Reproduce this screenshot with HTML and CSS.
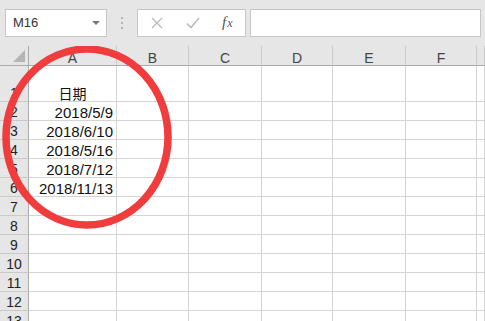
FILE: index.html
```html
<!DOCTYPE html>
<html lang="en">
<head>
  <meta charset="UTF-8">
  <title>Sheet1</title>
  <link rel="stylesheet" href="styles.css">
</head>
<body>
  <!-- Name box + formula bar -->
  <div class="toolbar">
    <div class="namebox">
      <span>M16</span>
      <svg class="caret" width="8" height="4" viewBox="0 0 8 4"><path d="M0 0h8L4 4z" fill="#7a7a7a"/></svg>
    </div>
    <div class="grip"><i></i><i></i><i></i></div>
    <div class="fbuttons">
      <svg width="12" height="12" viewBox="0 0 12 12"><path d="M1 1l10 10M11 1L1 11" stroke="#bcbcbc" stroke-width="1.4" fill="none"/></svg>
      <svg width="14" height="12" viewBox="0 0 14 12"><path d="M1 6.5l4 4L13 1" stroke="#bcbcbc" stroke-width="1.6" fill="none"/></svg>
      <span class="fx"><i>f</i><i class="sub">x</i></span>
    </div>
    <div class="finput"></div>
  </div>

  <!-- Worksheet -->
  <div class="sheet">
    <table class="grid">
      <colgroup>
        <col style="width:29px"><col style="width:88px"><col style="width:72px"><col style="width:73px">
        <col style="width:71px"><col style="width:73px"><col style="width:71px"><col style="width:8px">
      </colgroup>
      <tr class="head">
        <th class="corner"><svg width="12" height="12" viewBox="0 0 12 12"><path d="M12 0v12H0z" fill="#b5b5b5"/></svg></th>
        <th>A</th><th>B</th><th>C</th><th>D</th><th>E</th><th>F</th><th></th>
      </tr>
      <tr class="tall"><th>1</th><td class="center">日期</td><td></td><td></td><td></td><td></td><td></td><td></td></tr>
      <tr><th>2</th><td class="num">2018/5/9</td><td></td><td></td><td></td><td></td><td></td><td></td></tr>
      <tr><th>3</th><td class="num">2018/6/10</td><td></td><td></td><td></td><td></td><td></td><td></td></tr>
      <tr><th>4</th><td class="num">2018/5/16</td><td></td><td></td><td></td><td></td><td></td><td></td></tr>
      <tr><th>5</th><td class="num">2018/7/12</td><td></td><td></td><td></td><td></td><td></td><td></td></tr>
      <tr><th>6</th><td class="num">2018/11/13</td><td></td><td></td><td></td><td></td><td></td><td></td></tr>
      <tr><th>7</th><td></td><td></td><td></td><td></td><td></td><td></td><td></td></tr>
      <tr><th>8</th><td></td><td></td><td></td><td></td><td></td><td></td><td></td></tr>
      <tr><th>9</th><td></td><td></td><td></td><td></td><td></td><td></td><td></td></tr>
      <tr><th>10</th><td></td><td></td><td></td><td></td><td></td><td></td><td></td></tr>
      <tr><th>11</th><td></td><td></td><td></td><td></td><td></td><td></td><td></td></tr>
      <tr><th>12</th><td></td><td></td><td></td><td></td><td></td><td></td><td></td></tr>
      <tr><th>13</th><td></td><td></td><td></td><td></td><td></td><td></td><td></td></tr>
    </table>

    <!-- red hand-drawn ring over column A -->
    <svg class="mark" width="485" height="275" viewBox="0 0 485 275">
      <ellipse cx="87" cy="91" rx="81" ry="88" fill="none" stroke="#f03c3c" stroke-width="7.5"/>
    </svg>
  </div>
</body>
</html>
```

FILE: styles.css
```css
html, body {
  margin: 0;
  padding: 0;
}
body {
  width: 485px;
  height: 321px;
  overflow: hidden;
  background-color: #e6e6e6;
  font-family: "Liberation Sans", Arial, "Noto Sans CJK SC", sans-serif;
}

/* toolbar */
.toolbar {
  display: flex;
  align-items: center;
  height: 46px;
  padding: 0 4px 0 5px;
  box-sizing: border-box;
}
.namebox, .fbuttons, .finput {
  height: 28px;
  box-sizing: border-box;
  background: #fff;
  border: 1px solid #c6c6c6;
  margin-top: -1px;
}
.namebox {
  width: 102px;
  display: flex;
  align-items: center;
  justify-content: space-between;
  padding: 0 6px 0 7px;
  font-size: 13px;
  color: #333;
}
.caret {
  margin-top: 1px;
}
.grip {
  width: 30px;
  display: flex;
  flex-direction: column;
  align-items: center;
  gap: 3px;
}
.grip i {
  width: 2px;
  height: 2px;
  background: #b2b2b2;
}
.fbuttons {
  width: 109px;
  display: flex;
  align-items: center;
  padding: 0 0 0 13px;
}
.fbuttons svg:first-child {
  margin-right: 23px;
}
.fbuttons svg:nth-child(2) {
  margin-right: 22px;
}
.fx {
  font-family: "Liberation Serif", serif;
  font-style: italic;
  font-size: 15px;
  color: #555;
}
.fx i.sub {
  font-size: 12px;
  margin-left: 1px;
}
.finput {
  flex: 1;
  margin-left: 4px;
}

/* sheet */
.sheet {
  position: relative;
}
.grid {
  table-layout: fixed;
  border-collapse: separate;
  border-spacing: 0;
  width: 485px;
  background: #fff;
}
.grid th, .grid td {
  box-sizing: border-box;
  height: 19px;
  padding: 0;
  vertical-align: bottom;
  line-height: 15px;
  border-right: 1px solid #d4d4d4;
  border-bottom: 1px solid #d4d4d4;
  font-weight: normal;
  white-space: nowrap;
  overflow: hidden;
}
.grid th {
  background: #e6e6e6;
  color: #222;
  font-size: 14px;
  text-align: center;
  border-bottom-color: #cacaca;
  border-right-color: #ababab;
}
.grid td {
  font-size: 15px;
  color: #111;
}
.grid .head th {
  height: 20px;
  line-height: 14px;
  color: #444;
  border-right-color: #cacaca;
  border-bottom-color: #ababab;
}
.grid .head th.corner {
  text-align: right;
  vertical-align: bottom;
  line-height: 0;
  padding: 0 3px 3px 0;
  border-right-color: #ababab;
}
.grid .tall th, .grid .tall td {
  height: 36px;
}
.grid td.center {
  text-align: center;
  font-family: "Noto Sans CJK SC", sans-serif;
  font-size: 14px;
}
.grid td.num {
  text-align: right;
  padding-right: 3px;
}

.mark {
  position: absolute;
  left: 0;
  top: 0;
  pointer-events: none;
}
```
